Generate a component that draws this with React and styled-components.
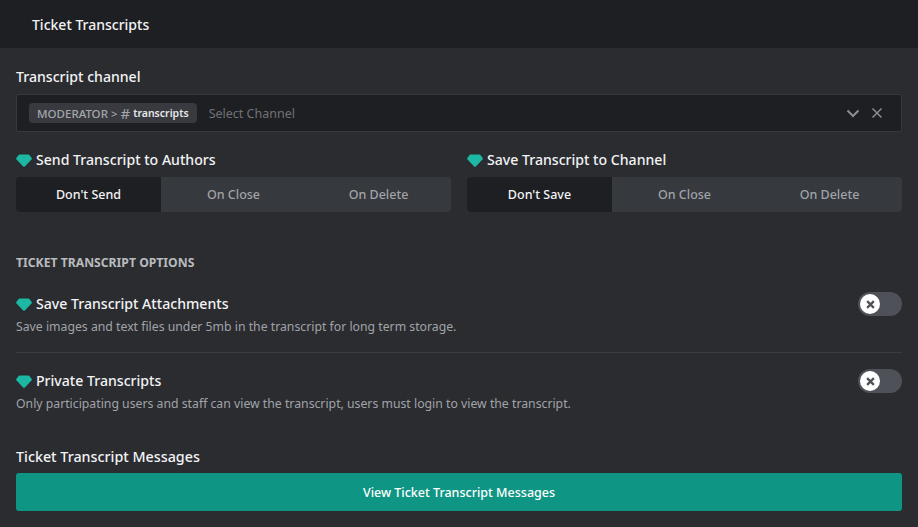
import React from "react";
import styled, { createGlobalStyle } from "styled-components";

const GlobalStyle = createGlobalStyle`
  html, body {
    margin: 0;
    padding: 0;
    background: #2b2c30;
    font-family: "Noto Sans", "Open Sans", sans-serif;
  }
  * { box-sizing: border-box; }
`;

const Page = styled.div`
  width: 918px;
  height: 527px;
  overflow: hidden;
  background: #2b2c30;
`;

const Header = styled.div`
  height: 48px;
  background: #1e1f23;
  padding-left: 32px;
  display: flex;
  align-items: center;
  color: #f2f3f5;
  font-size: 14px;
  font-weight: 500;
`;

const Body = styled.div`
  padding: 19px 16px 0;
`;

const Label = styled.div`
  color: #f2f3f5;
  font-size: 14.100px;
  font-weight: 500;
  line-height: 20px;
  display: flex;
  align-items: center;
  gap: 4px;
`;

const ChannelField = styled.div`
  margin-top: 7px;
  height: 38px;
  background: #1e1f23;
  border: 1px solid #36383d;
  border-radius: 2px;
  display: flex;
  align-items: center;
  padding: 0 18px 0 12px;
  color: #8e9095;
`;

const Tag = styled.div`
  height: 20px;
  background: #383a40;
  border-radius: 4px;
  padding: 0 8px;
  display: flex;
  align-items: center;
  font-size: 11.500px;
  font-weight: 500;
  color: #a3a6aa;
  white-space: nowrap;
`;

const TagHash = styled.span`
  font-size: 15px;
  font-weight: 400;
  margin: 0 3px 0 3px;
`;

const TagName = styled.b`
  color: #e6e7e9;
  font-size: 10.500px;
  font-weight: 600;
`;

const Placeholder = styled.div`
  margin-left: 12px;
  flex: 1;
  font-size: 12.500px;
  color: #6f7278;
`;

const FieldIcons = styled.div`
  display: flex;
  align-items: center;
  gap: 11px;
`;

const Columns = styled.div`
  margin-top: 18px;
  display: grid;
  grid-template-columns: 1fr 1fr;
  gap: 16px;
`;

const Segments = styled.div`
  margin-top: 7px;
  height: 35px;
  display: grid;
  grid-template-columns: repeat(3, 1fr);
  border-radius: 4px;
  overflow: hidden;
  background: #36393e;
`;

const Segment = styled.div`
  display: flex;
  align-items: center;
  justify-content: center;
  font-size: 12.500px;
  font-weight: 500;
  color: ${(p) => (p.$active ? "#f2f3f5" : "#a0a3a8")};
  background: ${(p) => (p.$active ? "#1e1f23" : "transparent")};
`;

const SectionTitle = styled.div`
  margin-top: 42px;
  font-size: 12.200px;
  font-weight: 700;
  line-height: 18px;
  color: #b9bbbe;
`;

const OptionRow = styled.div`
  display: flex;
  justify-content: space-between;
  align-items: flex-start;
  padding: ${(p) => (p.$first ? "22px 0 16px" : "18px 0 0")};
  border-bottom: ${(p) => (p.$first ? "1px solid #3a3c41" : "none")};
`;

const Description = styled.div`
  margin-top: 4px;
  font-size: 12.250px;
  line-height: 18px;
  color: #a0a3a8;
`;

const Toggle = styled.div`
  position: relative;
  width: 44px;
  height: 24px;
  margin-top: -2px;
  border-radius: 12px;
  background: #4e5158;
  flex-shrink: 0;
`;

const Knob = styled.div`
  position: absolute;
  left: 2px;
  top: 2px;
  width: 20px;
  height: 20px;
  border-radius: 50%;
  background: #fff;
  display: flex;
  align-items: center;
  justify-content: center;
`;

const MessagesLabel = styled(Label)`
  margin-top: 34px;
  font-size: 14.300px;
`;

const ViewButton = styled.div`
  margin-top: 6px;
  height: 38px;
  background: #0f9584;
  border-radius: 3px;
  display: flex;
  align-items: center;
  justify-content: center;
  color: #fff;
  font-size: 12.500px;
  font-weight: 500;
`;

const Gem = () => (
  <svg width="16" height="13" viewBox="0 0 16 13">
    <path d="M3.600 0.500h8.800c.4 0 .8.2 1 .5l2.300 3c.3.4.3.9 0 1.200L8.800 12.400c-.4.5-1.200.5-1.600 0L.3 5.200C0 4.900 0 4.400.3 4l2.300-3c.2-.3.6-.5 1-.5z" fill="#1cb8a3" />
  </svg>
);

const Chevron = () => (
  <svg width="14" height="14" viewBox="0 0 14 14" fill="none">
    <path d="M1.500 4.500 7 10l5.500-5.500" stroke="#8a8d92" strokeWidth="2" />
  </svg>
);

const Cross = ({ size = 12, color = "#8a8d92", width = 1.500 }) => (
  <svg width={size} height={size} viewBox="0 0 12 12" fill="none">
    <path d="M1.500 1.500l9 9M10.500 1.500l-9 9" stroke={color} strokeWidth={width} />
  </svg>
);

const SwitchOff = () => (
  <Toggle>
    <Knob>
      <Cross size={9} color="#4e5158" width={3} />
    </Knob>
  </Toggle>
);

const SegmentGroup = ({ first }) => (
  <Segments>
    <Segment $active>{first}</Segment>
    <Segment>On Close</Segment>
    <Segment>On Delete</Segment>
  </Segments>
);

const App = () => (
  <Page>
    <GlobalStyle />
    <Header>Ticket Transcripts</Header>
    <Body>
      <Label>Transcript channel</Label>
      <ChannelField>
        <Tag>
          MODERATOR &gt;<TagHash>#</TagHash>
          <TagName>transcripts</TagName>
        </Tag>
        <Placeholder>Select Channel</Placeholder>
        <FieldIcons>
          <Chevron />
          <Cross />
        </FieldIcons>
      </ChannelField>
      <Columns>
        <div>
          <Label>
            <Gem />
            Send Transcript to Authors
          </Label>
          <SegmentGroup first="Don't Send" />
        </div>
        <div>
          <Label>
            <Gem />
            Save Transcript to Channel
          </Label>
          <SegmentGroup first="Don't Save" />
        </div>
      </Columns>
      <SectionTitle>TICKET TRANSCRIPT OPTIONS</SectionTitle>
      <OptionRow $first>
        <div>
          <Label>
            <Gem />
            Save Transcript Attachments
          </Label>
          <Description>Save images and text files under 5mb in the transcript for long term storage.</Description>
        </div>
        <SwitchOff />
      </OptionRow>
      <OptionRow>
        <div>
          <Label>
            <Gem />
            Private Transcripts
          </Label>
          <Description>Only participating users and staff can view the transcript, users must login to view the transcript.</Description>
        </div>
        <SwitchOff />
      </OptionRow>
      <MessagesLabel>Ticket Transcript Messages</MessagesLabel>
      <ViewButton>View Ticket Transcript Messages</ViewButton>
    </Body>
  </Page>
);

export default App;
